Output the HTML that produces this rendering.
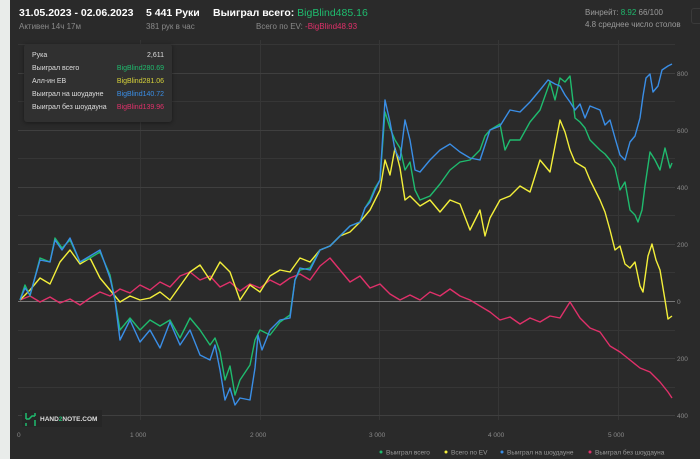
<!DOCTYPE html>
<html><head><meta charset="utf-8"><style>
body{margin:0;width:700px;height:459px;overflow:hidden;background:#e9ecea;font-family:"Liberation Sans","DejaVu Sans",sans-serif;}
#card{position:absolute;left:10px;top:0;width:690px;height:459px;background:#2a2a2a;}
.t{position:absolute;white-space:nowrap;}
</style></head><body>
<div id="card"></div>
<div class="t" style="left:19px;top:7px;color:#fff;font-size:10.5px;font-weight:bold;">31.05.2023 - 02.06.2023</div>
<div class="t" style="left:19px;top:22px;color:#8a8a8a;font-size:8px;">Активен 14ч 17м</div>
<div class="t" style="left:146px;top:7px;color:#fff;font-size:10.5px;font-weight:bold;">5 441 Руки</div>
<div class="t" style="left:146px;top:22px;color:#8a8a8a;font-size:8px;">381 рук в час</div>
<div class="t" style="left:213px;top:7px;color:#fff;font-size:10.5px;font-weight:bold;">Выиграл всего: <span style="color:#1fbb6e;font-weight:normal">BigBlind485.16</span></div>
<div class="t" style="left:256px;top:22px;color:#8a8a8a;font-size:8px;">Всего по EV: <span style="color:#e0306a">-BigBlind48.93</span></div>
<div class="t" style="left:585px;top:8px;color:#9a9a9a;font-size:8px;">Винрейт: <span style="color:#1fbb6e">8.92</span> 66/100</div>
<div class="t" style="left:585px;top:20px;color:#9a9a9a;font-size:8px;">4.8 среднее число столов</div>
<div style="position:absolute;left:691px;top:8px;width:14px;height:14px;border:1px solid #3a3a3a;border-radius:3px;"></div>
<svg style="position:absolute;left:0;top:0" width="700" height="459">
<g stroke="#363636" stroke-width="1">
<line x1="18" y1="44.5" x2="675" y2="44.5"/><line x1="18" y1="101.5" x2="675" y2="101.5"/><line x1="18" y1="158.5" x2="675" y2="158.5"/><line x1="18" y1="215.5" x2="675" y2="215.5"/><line x1="18" y1="272.5" x2="675" y2="272.5"/><line x1="18" y1="330.5" x2="675" y2="330.5"/><line x1="18" y1="387.5" x2="675" y2="387.5"/>
<line x1="140.5" y1="40" x2="140.5" y2="420"/><line x1="260.5" y1="40" x2="260.5" y2="420"/><line x1="379.5" y1="40" x2="379.5" y2="420"/><line x1="498.5" y1="40" x2="498.5" y2="420"/><line x1="618.5" y1="40" x2="618.5" y2="420"/>
</g>
<g stroke="#3f3f3f" stroke-width="1">
<line x1="18" y1="73.5" x2="675" y2="73.5"/><line x1="18" y1="130.5" x2="675" y2="130.5"/><line x1="18" y1="187.5" x2="675" y2="187.5"/><line x1="18" y1="244.5" x2="675" y2="244.5"/><line x1="18" y1="358.5" x2="675" y2="358.5"/><line x1="18" y1="415.5" x2="675" y2="415.5"/>
</g>
<line x1="18" y1="301.5" x2="675" y2="301.5" stroke="#777" stroke-width="1"/>
<g fill="none" stroke-width="1.4" stroke-linejoin="round">
<polyline stroke="#e0306a" points="20,300 30,296 40,302 50,297 60,303 70,299 80,305 90,298 100,292 110,296 120,289 130,293 140,285 150,290 160,282 170,287 180,276 190,272 200,280 210,276 220,287 230,282 240,291 250,284 260,288 270,280 280,285 290,278 300,274 310,280 320,266 330,258 340,270 350,282 360,276 370,288 380,284 390,294 400,300 410,295 420,300 430,292 440,296 450,289 460,296 470,300 480,306 490,312 500,320 510,317 520,324 530,318 540,322 550,316 560,318 570,302 580,318 590,328 600,332 610,346 620,352 630,360 640,368 650,372 660,382 668,392 672,398"/>
<polyline stroke="#f3ef3a" points="20,300 30,290 40,278 50,284 60,262 70,250 80,264 90,258 100,278 110,290 120,302 130,296 140,300 150,298 160,292 170,300 180,286 190,272 200,265 210,280 220,262 230,272 240,300 250,285 260,292 270,276 280,270 290,272 300,258 310,262 320,250 330,246 340,236 350,232 360,222 370,210 380,190 385,160 390,175 395,148 400,168 405,200 410,196 420,206 430,200 440,212 450,200 460,204 470,230 480,210 485,236 490,218 500,200 510,196 520,186 530,192 540,160 550,172 560,120 565,132 570,150 575,162 585,168 590,180 595,190 600,200 605,212 610,230 615,250 620,246 625,264 630,268 635,262 640,286 643,292 648,256 652,244 656,260 660,270 665,300 668,319 672,316"/>
<polyline stroke="#1fbb6e" points="20,300 25,285 30,296 40,258 50,262 55,238 62,248 70,240 80,262 90,258 100,252 110,275 115,300 120,330 130,318 140,330 150,320 160,326 170,320 180,338 190,318 200,330 210,345 215,338 220,352 225,380 230,366 235,395 240,380 250,365 255,340 260,330 270,335 280,322 290,315 295,280 300,270 310,268 320,250 330,246 340,236 350,226 360,222 365,208 370,200 375,188 380,180 385,112 390,128 395,140 400,148 405,170 410,162 415,190 420,200 430,196 440,184 450,170 460,162 470,160 480,150 485,136 490,130 500,124 505,150 510,140 520,140 530,122 540,110 550,82 555,100 560,78 565,82 570,76 575,118 580,122 585,128 590,140 600,150 605,154 610,160 615,168 620,190 625,182 630,210 635,215 638,222 642,210 645,186 650,152 655,160 660,170 665,148 670,168 672,163"/>
<polyline stroke="#3a8ee6" points="20,300 25,288 30,295 40,260 50,262 55,240 62,250 70,238 80,262 90,256 100,250 110,278 115,300 120,340 130,320 140,342 150,330 160,348 170,322 180,345 190,330 200,355 210,360 215,345 220,370 225,400 230,388 235,405 240,398 250,400 255,368 258,335 262,350 270,330 280,320 290,318 295,280 300,268 310,270 320,250 330,246 340,236 350,226 360,222 365,208 370,202 375,190 380,180 385,100 390,122 395,150 400,160 405,120 410,140 415,170 420,172 430,160 440,150 450,144 460,152 470,158 480,160 485,145 490,130 500,126 510,110 520,112 530,102 540,90 548,80 555,84 560,86 565,95 570,102 575,110 580,104 585,118 590,106 600,110 605,125 610,120 615,138 620,155 625,160 630,142 635,136 640,118 643,96 646,78 650,74 653,92 658,86 662,70 668,66 672,64"/>
</g>
<g font-size="6.5" fill="#8a8a8a" font-family="Liberation Sans,sans-serif">
<text x="677" y="76">800</text><text x="677" y="133">600</text><text x="677" y="190">400</text><text x="677" y="247">200</text><text x="677" y="304">0</text><text x="677" y="361">200</text><text x="677" y="418">400</text>
<text x="17" y="437">0</text><text x="130" y="437">1 000</text><text x="250" y="437">2 000</text><text x="369" y="437">3 000</text><text x="488" y="437">4 000</text><text x="608" y="437">5 000</text>
</g>
<g font-size="6.5" fill="#9a9a9a" font-family="Liberation Sans,sans-serif">
<circle cx="381" cy="452" r="1.5" fill="#1fbb6e"/><text x="386" y="454.5">Выиграл всего</text>
<circle cx="446" cy="452" r="1.5" fill="#f3ef3a"/><text x="451" y="454.5">Всего по EV</text>
<circle cx="502" cy="452" r="1.5" fill="#3a8ee6"/><text x="507" y="454.5">Выиграл на шоудауне</text>
<circle cx="590" cy="452" r="1.5" fill="#e0306a"/><text x="595" y="454.5">Выиграл без шоудауна</text>
</g>
<g>
<rect x="22" y="410" width="80" height="17" fill="#262626"/>
<path d="M26 413v6M26 423v3M35 413v3M35 420v6M26 419h3l3 -3h3" stroke="#1fbb6e" stroke-width="1.5" fill="none"/>
<text x="40" y="421" font-size="6.5" font-weight="bold" fill="#ddd" font-family="Liberation Sans,sans-serif">HAND<tspan fill="#1fbb6e">2</tspan>NOTE.COM</text>
</g>
</svg>
<div style="position:absolute;left:24px;top:44px;width:148px;height:78px;background:#303030;border-radius:3px;box-shadow:0 1px 4px rgba(0,0,0,.4);font-size:7px;color:#ddd;">
<div class="t" style="left:8px;top:8px;">Рука</div><div class="t" style="right:8px;top:8px;">2,611</div>
<div class="t" style="left:8px;top:21px;">Выиграл всего</div><div class="t" style="right:8px;top:21px;color:#1fbb6e">BigBlind280.69</div>
<div class="t" style="left:8px;top:34px;">Алл-ин EВ</div><div class="t" style="right:8px;top:34px;color:#d6d23a">BigBlind281.06</div>
<div class="t" style="left:8px;top:47px;">Выиграл на шоудауне</div><div class="t" style="right:8px;top:47px;color:#3a8ee6">BigBlind140.72</div>
<div class="t" style="left:8px;top:60px;">Выиграл без шоудауна</div><div class="t" style="right:8px;top:60px;color:#e0306a">BigBlind139.96</div>
</div>
</body></html>
